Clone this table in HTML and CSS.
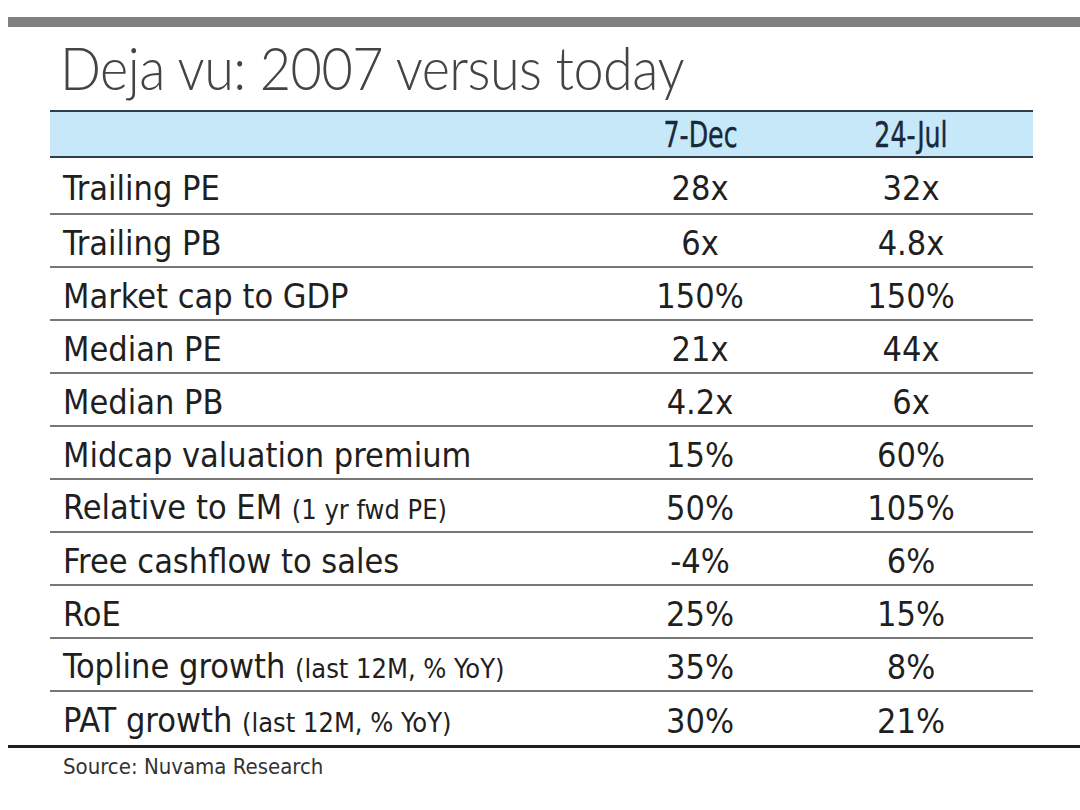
FILE: index.html
```html
<!DOCTYPE html>
<html lang="en">
<head>
<meta charset="utf-8">
<title>Deja vu: 2007 versus today</title>
<link rel="stylesheet" href="styles.css">
</head>
<body>
<div class="page">
  <div class="topbar"></div>
  <h1 class="title"><span class="title-text">Deja vu: 2007 versus today</span></h1>
  <div class="table">
    <div class="row head">
      <div class="cell label"></div>
      <div class="cell val"><span class="hd">7-Dec</span></div>
      <div class="cell val"><span class="hd">24-Jul</span></div>
    </div>
    <div class="row first">
      <div class="cell label">Trailing PE</div>
      <div class="cell val">28x</div>
      <div class="cell val">32x</div>
    </div>
    <div class="row">
      <div class="cell label">Trailing PB</div>
      <div class="cell val">6x</div>
      <div class="cell val">4.8x</div>
    </div>
    <div class="row">
      <div class="cell label">Market cap to GDP</div>
      <div class="cell val">150%</div>
      <div class="cell val">150%</div>
    </div>
    <div class="row">
      <div class="cell label">Median PE</div>
      <div class="cell val">21x</div>
      <div class="cell val">44x</div>
    </div>
    <div class="row">
      <div class="cell label">Median PB</div>
      <div class="cell val">4.2x</div>
      <div class="cell val">6x</div>
    </div>
    <div class="row">
      <div class="cell label">Midcap valuation premium</div>
      <div class="cell val">15%</div>
      <div class="cell val">60%</div>
    </div>
    <div class="row">
      <div class="cell label">Relative to EM <span class="note">(1 yr fwd PE)</span></div>
      <div class="cell val">50%</div>
      <div class="cell val">105%</div>
    </div>
    <div class="row">
      <div class="cell label">Free cashflow to sales</div>
      <div class="cell val">-4%</div>
      <div class="cell val">6%</div>
    </div>
    <div class="row">
      <div class="cell label">RoE</div>
      <div class="cell val">25%</div>
      <div class="cell val">15%</div>
    </div>
    <div class="row">
      <div class="cell label">Topline growth <span class="note">(last 12M, % YoY)</span></div>
      <div class="cell val">35%</div>
      <div class="cell val">8%</div>
    </div>
    <div class="row last">
      <div class="cell label">PAT growth <span class="note">(last 12M, % YoY)</span></div>
      <div class="cell val">30%</div>
      <div class="cell val">21%</div>
    </div>
  </div>
  <div class="bottomrule"></div>
  <p class="source">Source: Nuvama Research</p>
</div>
</body>
</html>
```
FILE: styles.css
```css
html, body {
  margin: 0;
  padding: 0;
  background: #ffffff;
}

.page {
  padding-top: 17px;
  font-family: "DejaVu Sans Condensed", "DejaVu Sans", sans-serif;
  font-stretch: condensed;
  color: #1f1f1f;
}

.topbar {
  margin-left: 8px;
  height: 10px;
  background: #808080;
}

.title {
  margin: 4px 0 7px 60px;
  font-family: Lato, "Open Sans", sans-serif;
  font-weight: 300;
  font-size: 60px;
  line-height: 72px;
  color: #444444;
  white-space: nowrap;
}

.title-text {
  display: inline-block;
  letter-spacing: -0.6px;
  transform: scaleX(0.9);
  transform-origin: left center;
}

.table {
  margin-left: 50px;
  width: 983px;
}

.row {
  display: grid;
  grid-template-columns: 548px 204px 218px 1fr;
  height: 53px;
  box-sizing: border-box;
  border-bottom: 2px solid #777777;
  align-items: center;
}

.row.first {
  height: 57px;
}

.row.last {
  border-bottom: none;
}

.row.head {
  height: 48px;
  background: #c7e8f9;
  border-top: 2px solid #2e3d47;
  border-bottom: 2px solid #2e3d47;
}

.row.head .val {
  color: #17293a;
  padding-top: 2px;
}

.hd {
  display: inline-block;
  font-size: 36px;
  transform: scaleX(0.78);
  -webkit-text-stroke: 0.4px #17293a;
}

.cell {
  font-size: 34px;
  line-height: 40px;
  padding-top: 5px;
  white-space: nowrap;
}

.label {
  padding-left: 13px;
}

.val {
  text-align: center;
}

.note {
  font-size: 27px;
}

.bottomrule {
  margin-left: 8px;
  height: 3px;
  background: #1e1e1e;
}

.source {
  margin: 6px 0 0 63px;
  font-size: 22px;
  line-height: 26px;
  color: #333333;
}
```
